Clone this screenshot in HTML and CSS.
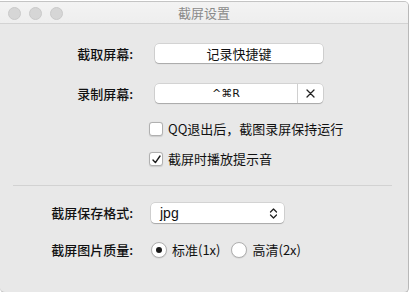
FILE: index.html
```html
<!DOCTYPE html>
<html lang="zh-CN">
<head>
    <meta charset="UTF-8">
    <meta name="viewport" content="width=device-width, initial-scale=1.0">
    <title>截屏设置</title>
    <link rel="stylesheet" href="styles.css">
</head>
<body>
    <div class="window">
        <div class="titlebar">
            <div class="lights">
                <span class="light"></span>
                <span class="light"></span>
                <span class="light"></span>
            </div>
            <div class="title">截屏设置</div>
        </div>

        <div class="content">
            <div class="row row-shortcut">
                <label class="label">截取屏幕:</label>
                <button class="btn btn-wide">记录快捷键</button>
            </div>

            <div class="row row-record">
                <label class="label">录制屏幕:</label>
                <div class="combo">
                    <span class="combo-field">^⌘R</span>
                    <span class="combo-clear">
                        <svg width="9" height="9" viewBox="0 0 9 9">
                            <path d="M1 1 L8 8 M8 1 L1 8" stroke="#222" stroke-width="1.3" stroke-linecap="round"/>
                        </svg>
                    </span>
                </div>
            </div>

            <div class="check-row check-first">
                <span class="checkbox"></span>
                <span class="check-text">QQ退出后，截图录屏保持运行</span>
            </div>
            <div class="check-row check-second">
                <span class="checkbox">
                    <svg width="11" height="11" viewBox="0 0 11 11">
                        <path d="M2 6 L4.4 8.6 L9 2" fill="none" stroke="#1a1a1a" stroke-width="1.4" stroke-linecap="round" stroke-linejoin="round"/>
                    </svg>
                </span>
                <span class="check-text">截屏时播放提示音</span>
            </div>

            <div class="separator"></div>

            <div class="row row-format">
                <label class="label">截屏保存格式:</label>
                <div class="popup">
                    <span class="popup-value">jpg</span>
                    <svg class="popup-arrows" width="9" height="13" viewBox="0 0 9 13">
                        <path d="M1.5 5 L4.5 2 L7.5 5 M1.5 8 L4.5 11 L7.5 8" fill="none" stroke="#222" stroke-width="1.3" stroke-linecap="round" stroke-linejoin="round"/>
                    </svg>
                </div>
            </div>

            <div class="row row-quality">
                <label class="label">截屏图片质量:</label>
                <div class="radios">
                    <span class="radio checked"></span>
                    <span class="radio-text">标准(1x)</span>
                    <span class="radio radio-second"></span>
                    <span class="radio-text">高清(2x)</span>
                </div>
            </div>
        </div>
    </div>
</body>
</html>
```

FILE: styles.css
```css
body {
    margin: 0;
    padding: 0;
    background-color: #ffffff;
    font-family: "Noto Sans CJK SC", "Liberation Sans", sans-serif;
    font-size: 13px;
    color: #111111;
    overflow: hidden;
}

.window {
    width: 408px;
    height: 290px;
    margin-top: 1px;
    background-color: #e8e8e8;
    border-top: 1px solid #c4c4c4;
    border-right: 1px solid #b8b8b8;
    border-bottom: 1px solid #b8b8b8;
    border-radius: 0 5px 5px 5px;
    overflow: hidden;
}

.titlebar {
    position: relative;
    height: 21px;
    background: linear-gradient(#f3f3f3, #eeeeee);
    border-bottom: 1px solid #d3d3d3;
    display: flex;
    align-items: center;
    justify-content: center;
}

.lights {
    position: absolute;
    left: 8px;
    top: 5px;
    display: flex;
    gap: 8px;
}

.light {
    width: 11px;
    height: 11px;
    border-radius: 50%;
    background-color: #d6d6d6;
    border: 0.5px solid #cacaca;
}

.title {
    color: #8a8a8a;
    font-size: 13px;
    line-height: 21px;
}

.content {
    padding-top: 20px;
}

.row {
    display: flex;
    align-items: center;
}

.label {
    width: 133px;
    text-align: right;
    flex-shrink: 0;
    line-height: 18px;
    font-weight: 500;
}

.btn {
    font-family: inherit;
    font-size: 13px;
    color: #111111;
    background-color: #ffffff;
    border: none;
    border-radius: 4px;
    box-shadow: 0 0 0 0.5px rgba(0, 0, 0, 0.18), 0 1px 1px rgba(0, 0, 0, 0.2);
    padding: 0;
}

.row-shortcut {
    height: 19px;
}

.btn-wide {
    margin-left: 22px;
    width: 168px;
    height: 19px;
    line-height: 19px;
}

.row-record {
    height: 19px;
    margin-top: 21px;
}

.combo {
    margin-left: 22px;
    width: 168px;
    height: 19px;
    display: flex;
    background-color: #ffffff;
    border-radius: 4px;
    box-shadow: 0 0 0 0.5px rgba(0, 0, 0, 0.18), 0 1px 1px rgba(0, 0, 0, 0.2);
}

.combo-field {
    width: 142px;
    text-align: center;
    line-height: 19px;
    font-family: "DejaVu Sans", sans-serif;
    font-size: 11px;
    border-right: 1px solid #d0d0d0;
}

.combo-clear {
    flex: 1;
    display: flex;
    align-items: center;
    justify-content: center;
}

.check-row {
    display: flex;
    align-items: center;
    margin-left: 149px;
    height: 14px;
}

.check-first {
    margin-top: 19px;
}

.check-second {
    margin-top: 16px;
}

.checkbox {
    width: 12px;
    height: 12px;
    background-color: #ffffff;
    border: 0.5px solid #b0b0b0;
    border-radius: 3px;
    box-shadow: 0 0.5px 1px rgba(0, 0, 0, 0.12);
    display: flex;
    align-items: center;
    justify-content: center;
}

.check-text {
    margin-left: 5px;
    line-height: 14px;
}

.separator {
    margin: 19px 16px 0 13px;
    height: 1px;
    background-color: #d2d2d2;
}

.row-format {
    margin-top: 17px;
    height: 20px;
}

.popup {
    margin-left: 18px;
    width: 133px;
    height: 20px;
    background-color: #ffffff;
    border-radius: 4px;
    box-shadow: 0 0 0 0.5px rgba(0, 0, 0, 0.18), 0 1px 1px rgba(0, 0, 0, 0.2);
    display: flex;
    align-items: center;
    justify-content: space-between;
    padding: 0 6px 0 9px;
    box-sizing: border-box;
}

.popup-value {
    font-family: "Liberation Sans", sans-serif;
    font-size: 14px;
}

.row-quality {
    margin-top: 19px;
    height: 15px;
}

.radios {
    margin-left: 18px;
    display: flex;
    align-items: center;
}

.radio {
    width: 14px;
    height: 14px;
    background-color: #ffffff;
    border: 0.5px solid #b0b0b0;
    border-radius: 50%;
    box-shadow: 0 0.5px 1px rgba(0, 0, 0, 0.12);
    display: flex;
    align-items: center;
    justify-content: center;
}

.radio.checked::after {
    content: "";
    width: 6px;
    height: 6px;
    border-radius: 50%;
    background-color: #1a1a1a;
}

.radio-second {
    margin-left: 11px;
}

.radio-text {
    margin-left: 5px;
    line-height: 15px;
}
```
